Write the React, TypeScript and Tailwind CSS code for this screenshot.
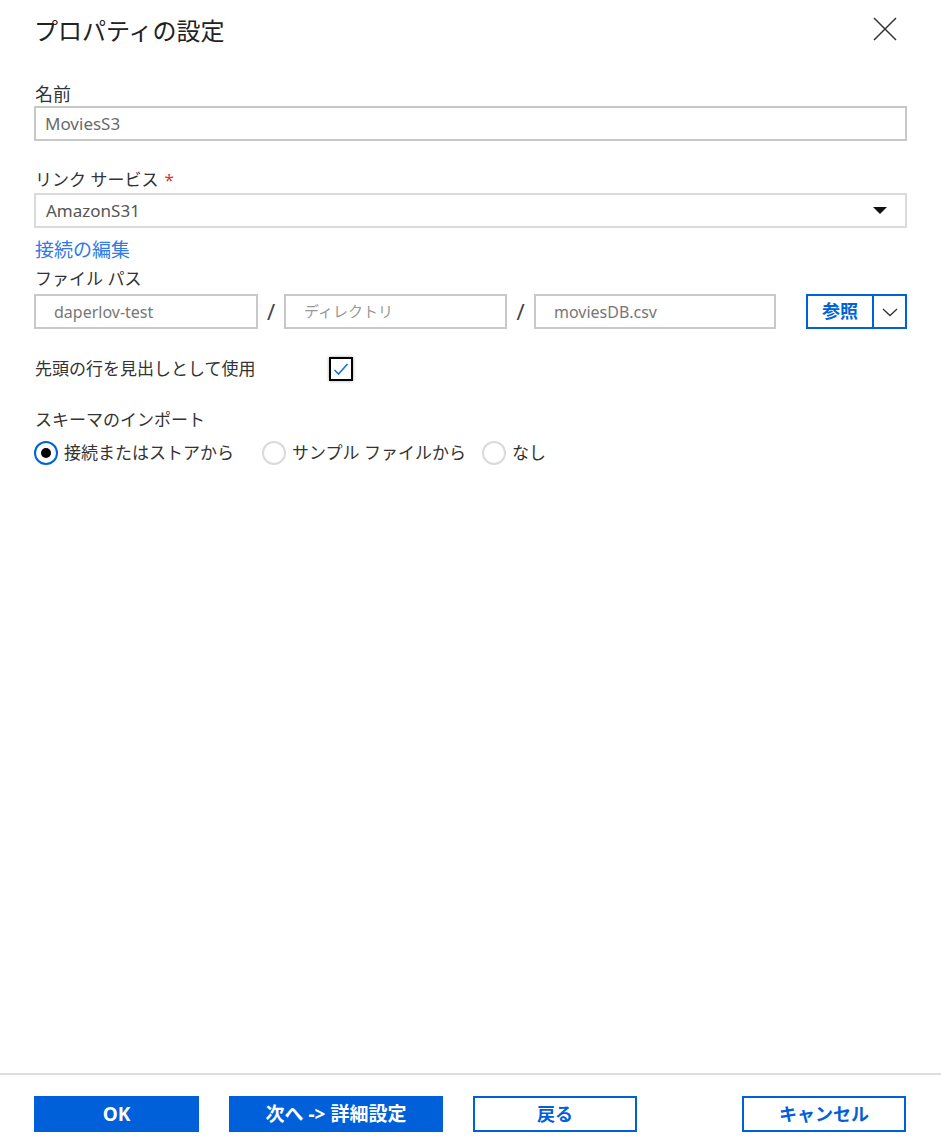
import React from "react";

const font = { fontFamily: '"Noto Sans", "Noto Sans CJK JP", sans-serif' };

function Radio({ checked }: { checked?: boolean }) {
  return checked ? (
    <span className="flex h-[24px] w-[24px] items-center justify-center rounded-full border-2 border-[#0062d9] bg-white">
      <span className="h-[10px] w-[10px] rounded-full bg-black" />
    </span>
  ) : (
    <span className="h-[24px] w-[24px] rounded-full border-2 border-[#dadada] bg-white" />
  );
}

export default function App() {
  return (
    <div className="flex h-[1145px] w-[941px] flex-col bg-white text-[#333]" style={font}>
      <div className="flex-1 px-[34px]">
        <div className="flex h-[60px] items-center justify-between pt-[1px]">
          <h1 className="text-[24px] font-normal text-[#222]">プロパティの設定</h1>
          <svg width="24" height="24" viewBox="0 0 24 24" className="mr-[10px] mt-[-3px]">
            <path d="M1 1 L23 23 M23 1 L1 23" stroke="#333" strokeWidth="1.5" fill="none" />
          </svg>
        </div>

        <div className="mt-[22px] flex h-[24px] items-center pl-[1px] text-[18px]">名前</div>
        <div className="flex h-[35px] items-center border-2 border-[#c8c8c8] px-[9px] text-[17px] text-[#6a6a6a]">
          MoviesS3
        </div>

        <div className="mt-[26px] flex h-[26px] items-center pl-[1px] text-[17px]">
          リンク サービス<span className="ml-[6px] text-[#d13438]">*</span>
        </div>
        <div className="flex h-[35px] items-center justify-between border-2 border-[#dadada] pl-[10px] pr-[18px] text-[17px] text-[#555]">
          <span>AmazonS31</span>
          <svg width="14" height="8" viewBox="0 0 14 8">
            <path d="M0 0 H14 L7 7 Z" fill="#111" />
          </svg>
        </div>

        <div className="mt-[8px] flex h-[28px] items-center pl-[1px] text-[19px] text-[#2f7be6]">接続の編集</div>
        <div className="flex h-[30px] items-center pl-[1px] text-[17px]">ファイル パス</div>

        <div className="flex h-[35px] items-center">
          <div className="flex h-[35px] w-[224px] items-center border-2 border-[#c8c8c8] pl-[18px] text-[16px] text-[#777]">
            daperlov-test
          </div>
          <div className="flex w-[26px] justify-center text-[22px] text-[#444]">/</div>
          <div className="flex h-[35px] w-[223px] items-center border-2 border-[#c8c8c8] pl-[18px] text-[15px] text-[#999]">
            ディレクトリ
          </div>
          <div className="flex w-[27px] justify-center text-[22px] text-[#444]">/</div>
          <div className="flex h-[35px] w-[242px] items-center border-2 border-[#c8c8c8] pl-[18px] text-[16px] text-[#777]">
            moviesDB.csv
          </div>
          <div className="ml-[30px] flex h-[35px] border-2 border-[#0062d9]">
            <div className="flex w-[66px] items-center justify-center border-r-2 border-[#0062d9] text-[18px] font-bold text-[#0062d9]">
              参照
            </div>
            <div className="flex w-[31px] items-center justify-center">
              <svg width="16" height="10" viewBox="0 0 16 10">
                <path d="M1 2 L8 8.5 L15 2" stroke="#333" strokeWidth="1.3" fill="none" />
              </svg>
            </div>
          </div>
        </div>

        <div className="mt-[28px] flex h-[24px] items-center">
          <span className="w-[295px] pl-[1px] text-[17px]">先頭の行を見出しとして使用</span>
          <span className="flex h-[24px] w-[24px] items-center justify-center border-2 border-black bg-white shadow-[0_0_3px_rgba(0,0,0,0.35)]">
            <svg width="16" height="14" viewBox="0 0 16 14">
              <path d="M1.5 8 L5.5 12 L14.5 2" stroke="#1a6fe0" strokeWidth="1.6" fill="none" />
            </svg>
          </span>
        </div>

        <div className="mt-[27px] flex h-[24px] items-center pl-[1px] text-[17px]">スキーマのインポート</div>
        <div className="mt-[8px] flex h-[26px] items-center text-[17px]">
          <Radio checked />
          <span className="ml-[6px] w-[198px]">接続またはストアから</span>
          <Radio />
          <span className="ml-[6px] w-[190px]">サンプル ファイルから</span>
          <Radio />
          <span className="ml-[6px]">なし</span>
        </div>
      </div>

      <div className="h-[72px] border-t-2 border-[#dddddd] px-[34px] pt-[21px]">
        <div className="flex text-[18px] font-bold">
          <button className="flex h-[36px] w-[165px] items-center justify-center bg-[#0060d9] text-[19px] text-white">OK</button>
          <button className="ml-[30px] flex h-[36px] w-[214px] items-center justify-center bg-[#0060d9] text-[19px] text-white">
            次へ -&gt; 詳細設定
          </button>
          <button className="ml-[30px] flex h-[36px] w-[164px] items-center justify-center border-2 border-[#0060d9] text-[#0060d9]">
            戻る
          </button>
          <button className="ml-[105px] flex h-[36px] w-[164px] items-center justify-center border-2 border-[#0060d9] text-[#0060d9]">
            キャンセル
          </button>
        </div>
      </div>
    </div>
  );
}
